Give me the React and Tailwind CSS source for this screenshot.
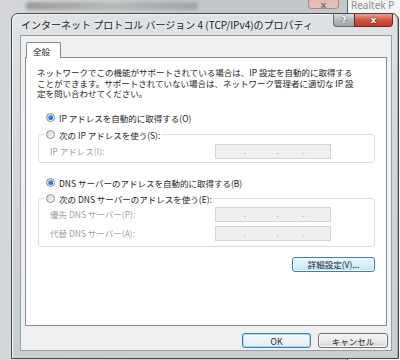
import React from "react";

function Radio({ checked }) {
  return (
    <span className="flex size-[9px] shrink-0 items-center justify-center rounded-full border border-[#8c8f92] bg-linear-to-br from-[#d4d6d8] to-[#fbfbfb]">
      {checked && <span className="size-[5px] rounded-full bg-linear-to-br from-[#8fd0f8] via-[#2f86d8] to-[#17509a]" />}
    </span>
  );
}

function RadioRow({ checked, children }) {
  return (
    <div className="flex h-[12px] items-center gap-[4px] whitespace-nowrap leading-[12px]">
      <Radio checked={checked} />
      <span>{children}</span>
    </div>
  );
}

function IpBox() {
  return (
    <div className="flex h-[15px] w-[116px] items-center border border-[#d2d6da] bg-[#efefef] text-[8px] leading-none text-[#a8a8a8]">
      <span className="w-[28px]" />
      <span>.</span>
      <span className="w-[30px]" />
      <span>.</span>
      <span className="w-[24px]" />
      <span>.</span>
    </div>
  );
}

function FieldRow({ label }) {
  return (
    <div className="flex items-center">
      <span className="w-[176px] whitespace-nowrap pl-[11px] leading-[12px] text-[#a2a2a2]">{label}</span>
      <IpBox />
    </div>
  );
}

export default function App() {
  return (
    <div className="relative h-[360px] w-[400px] overflow-hidden bg-[#f4f4f4] font-['Noto_Sans_CJK_JP',sans-serif]">
      {/* window further behind */}
      <div className="absolute left-[351px] top-0 whitespace-nowrap font-['Noto_Sans',sans-serif] text-[10px] leading-[11px] text-[#8e8e8e]">
        Realtek P
      </div>

      {/* background window */}
      <div className="absolute left-[-8px] top-[-14px] h-[400px] w-[356px] rounded-t-[6px] border border-[#5d6369] bg-linear-to-r from-[#d7d9db] via-[#c4c8cb] to-[#c4c8cb]">
        <div className="flex h-[27px] items-start">
          <div className="ml-[33px] mt-[15px] h-[8px] w-[172px] rounded-[3px] bg-linear-to-r from-[#9c9c9c] via-[#b8b8b8] to-[#a4a4a4] blur-[1.5px]" />
          <div className="ml-auto mr-[8px] flex h-[22px] w-[31px] items-end justify-center rounded-b-[4px] border border-t-0 border-[#a88a86] bg-linear-to-b from-[#d9a9a1] to-[#e3c3bd]">
            <span className="-mb-[2px] font-['DejaVu_Sans',sans-serif] text-[9px] font-bold leading-[9px] text-[#7a7a7a]">x</span>
          </div>
        </div>
      </div>

      {/* dialog window */}
      <div className="absolute left-[11px] top-[13px] flex h-[346px] w-[388px] flex-col rounded-t-[7px] border border-[#3f474f] bg-linear-to-b from-[#dfe2e5] via-[#d2d6da] to-[#c9ced3] shadow-[inset_1px_1px_0_#f4f6f8,inset_-1px_0_0_#a5abb1]">
        {/* title bar */}
        <div className="flex h-[21px] items-start">
          <span className="mt-[4px] whitespace-nowrap pl-[9px] text-[10px] leading-[14px] text-[#1b1b1b] [text-shadow:0_0_5px_#ffffff]">
            インターネット プロトコル バージョン 4 (TCP/IPv4)のプロパティ
          </span>
          <div className="ml-auto mr-[5px] flex">
            <div className="flex h-[13px] w-[21px] items-center justify-center rounded-bl-[4px] border border-t-0 border-r-0 border-[#676c71] bg-linear-to-b from-[#dcdfe2] via-[#b2b6ba] to-[#a3a8ad] font-['DejaVu_Sans',sans-serif] text-[9px] font-bold leading-none text-white [text-shadow:0_0_2px_#333]">
              ?
            </div>
            <div className="flex h-[13px] w-[39px] items-center justify-center rounded-br-[4px] border border-t-0 border-[#6b2a20] bg-linear-to-b from-[#e7a497] via-[#cf5440] to-[#c03b27] font-['DejaVu_Sans',sans-serif] text-[9px] font-bold leading-none text-white [text-shadow:0_0_2px_#4a1008]">
              x
            </div>
          </div>
        </div>

        {/* client area */}
        <div className="ml-[8px] mr-[6px] flex h-[316px] flex-col border border-[#959da5] bg-[#f0f0f0] pl-[4px] pr-[3px] pt-[6px] text-[8.5px] text-[#1e1e1e]">
          <div className="relative z-10 -mb-px ml-px flex h-[16px] w-[35px] items-center rounded-t-[2px] border border-b-0 border-[#898c95] bg-white pl-[6px] leading-[12px]">
            全般
          </div>

          <div className="flex h-[269px] w-[362px] flex-col border border-[#898c95] bg-white pl-[12px] pr-[11px] pt-[9px]">
            <p className="-ml-px whitespace-nowrap leading-[10.5px]">
              ネットワークでこの機能がサポートされている場合は、IP 設定を自動的に取得する
              <br />
              ことができます。サポートされていない場合は、ネットワーク管理者に適切な IP 設
              <br />
              定を問い合わせてください。
            </p>

            <div className="ml-[8px] mt-[13px]">
              <RadioRow checked>IP アドレスを自動的に取得する(O)</RadioRow>
            </div>

            <fieldset className="mt-[5px] rounded-[3px] border border-[#d5dfe5] pb-[3px]">
              <legend className="ml-[5px] pl-[2px] pr-[2px]">
                <RadioRow>次の IP アドレスを使う(S):</RadioRow>
              </legend>
              <div className="mt-[3px]">
                <FieldRow label="IP アドレス(I):" />
              </div>
            </fieldset>

            <div className="ml-[8px] mt-[14px]">
              <RadioRow checked>DNS サーバーのアドレスを自動的に取得する(B)</RadioRow>
            </div>

            <fieldset className="mt-[4px] rounded-[3px] border border-[#d5dfe5] pb-[5px]">
              <legend className="ml-[5px] pl-[2px] pr-[2px]">
                <RadioRow>次の DNS サーバーのアドレスを使う(E):</RadioRow>
              </legend>
              <div className="mt-[2px] flex flex-col gap-[4px]">
                <FieldRow label="優先 DNS サーバー(P):" />
                <FieldRow label="代替 DNS サーバー(A):" />
              </div>
            </fieldset>

            <button className="mt-[10px] flex h-[15px] w-[83px] items-center justify-center self-end rounded-[3px] border border-[#3c7fb1] bg-linear-to-b from-[#eaf6fd] via-[#d9f0fc] to-[#bee6fd] leading-[12px] text-[#1e1e1e] shadow-[inset_0_0_0_1px_#f4fbff]">
              詳細設定(V)...
            </button>
          </div>

          <div className="mt-[7px] flex justify-end gap-[7px]">
            <button className="flex h-[15px] w-[69px] items-center justify-center rounded-[3px] border border-[#3c7fb1] bg-linear-to-b from-[#f4f9fc] to-[#e2eef6] leading-[12px] text-[#1e1e1e] shadow-[inset_0_0_0_1px_#a7d8f5]">
              OK
            </button>
            <button className="flex h-[15px] w-[70px] items-center justify-center rounded-[3px] border border-[#707070] bg-linear-to-b from-[#f3f3f3] via-[#ebebeb] to-[#d6d6d6] leading-[12px] text-[#1e1e1e] shadow-[inset_0_0_0_1px_#fbfbfb]">
              キャンセル
            </button>
          </div>
        </div>
      </div>
    </div>
  );
}
